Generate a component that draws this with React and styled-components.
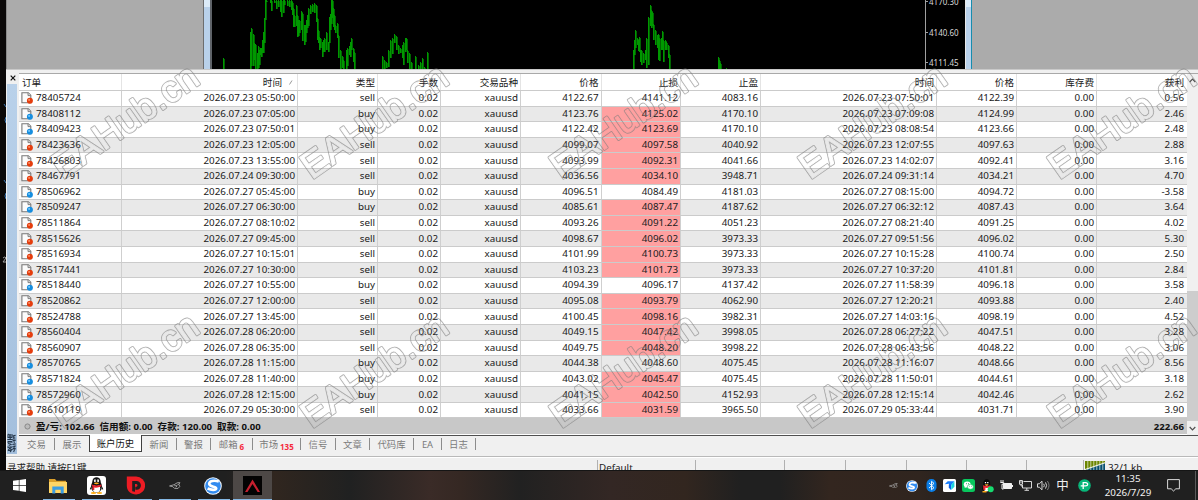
import React from "react";
import styled, { createGlobalStyle } from "styled-components";

const GlobalStyle = createGlobalStyle`
  * {
    box-sizing: border-box;
  }

  body {
    margin: 0;
    overflow: hidden;
    font-family: "Noto Sans", "Noto Sans CJK SC", sans-serif;
    font-size: 9.8px;
    color: #202020;
  }

  svg {
    display: block;
    flex: none;
  }
`;

const Screen = styled.div`
  position: relative;
  width: 1198px;
  height: 500px;
  display: flex;
  flex-direction: column;
  overflow: hidden;
  background: #000;
`;

const Desktop = styled.div`
  height: 470px;
  display: flex;
`;

const DesktopEdge = styled.div`
  width: 6px;
  background: #0b0909;
`;

const Window = styled.div`
  width: 1192px;
  display: flex;
  flex-direction: column;
  background: #f0f0f0;
`;

const Workspace = styled.div`
  height: 69px;
  display: flex;
  background: #ababab;
  border-left: 1px solid #8b8b8b;
`;

const EmptyArea = styled.div`
  width: 196px;
`;

const Frame = styled.div`
  width: ${(p) => p.$width}px;
  background: linear-gradient(#dcebf8 0 7px, #b9d1ea 7px);
  border-left: ${(p) => p.$left};
  border-right: ${(p) => p.$right};
`;

const Chart = styled.div`
  width: 713px;
  background: #000;
`;

const PriceAxis = styled.div`
  width: 40px;
  background: #000;
  border-left: 1px solid #a0a0a0;
  overflow: hidden;
`;

const PriceLabel = styled.div`
  height: 30.5px;
  line-height: 14px;
  margin-top: ${(p) => (p.$first ? "-5px" : 0)};
  font-size: 8px;
  color: #d8d8d8;
  display: flex;
  white-space: nowrap;

  &::before {
    content: "";
    width: 2px;
    height: 1px;
    margin: 6px 1px 0 0;
    background: #a0a0a0;
  }
`;

const Terminal = styled.div`
  height: 388px;
  display: flex;
  border-top: 1px solid #c9c9c9;
  padding: 3px 0 0 1px;
`;

const SideBar = styled.div`
  width: 12px;
  display: flex;
  flex-direction: column;
  align-items: center;
`;

const CloseBox = styled.div`
  height: 11px;
  padding-top: 2px;
`;

const SideCaption = styled.div`
  width: 10px;
  margin-right: 2px;
  height: 370px;
  background: linear-gradient(#b9d1ea, #a3bfdd);
  display: flex;
  align-items: flex-end;
  justify-content: center;
  padding-bottom: 2px;

  span {
    writing-mode: vertical-rl;
    transform: rotate(180deg);
    font: bold 9px/10px "Noto Sans CJK SC", sans-serif;
    color: #26384c;
  }
`;

const Content = styled.div`
  width: 1179px;
`;

const TableArea = styled.div`
  height: 363px;
  display: flex;
  border-top: 1px solid #a9a9a9;
  border-bottom: 1px solid #505050;
  background: #fff;
`;

const Table = styled.div`
  width: 1168px;
`;

const Row = styled.div`
  display: grid;
  grid-template-columns: 102.5px 176.5px 80px 63px 80px 80.5px 79.5px 80px 176px 80px 80px 90px;
  height: 15.6px;
  background: ${(p) => (p.$shaded ? "#e9e9e9" : "#fff")};
  border-bottom: 1px solid #cbcbcb;
`;

const HeadRow = styled(Row)`
  height: 17px;
`;

const Cell = styled.div`
  display: flex;
  align-items: center;
  justify-content: ${(p) => (p.$first ? "flex-start" : "flex-end")};
  padding: 0 ${(p) => (p.$last ? 3 : 2)}px 0 2px;
  border-right: ${(p) => (p.$last ? "none" : "1px solid #cfcfcf")};
  line-height: 14px;
  white-space: nowrap;
  background: ${(p) => (p.$hit ? "#ffa0a0" : "transparent")};
`;

const HeadCell = styled(Cell)`
  font-size: 9.6px;
  border-right-color: #e4e4e4;
  padding-top: 1px;
  padding-left: 3px;

  svg {
    margin: 0 2px 0 7px;
  }
`;

const OrderId = styled.span`
  margin-left: 3px;
`;

const Summary = styled.div`
  height: 16px;
  display: flex;
  align-items: center;
  justify-content: space-between;
  background: #c8c8c8;
  padding: 0 3px 0 5px;
  font-size: 9.6px;
  font-weight: 700;
  color: #111;
  white-space: pre;
`;

const Balance = styled.div`
  display: flex;
  align-items: center;
  gap: 5px;
`;

const ScrollBar = styled.div`
  width: 11px;
  display: flex;
  flex-direction: column;
  align-items: center;
  background: #f0f0f0;
`;

const ScrollButton = styled.div`
  height: 14px;
  display: flex;
  align-items: center;
`;

const ScrollThumb = styled.div`
  width: 11px;
  height: 132px;
  margin-top: 203px;
  background: #cdcdcd;
`;

const Tabs = styled.div`
  display: flex;
  height: 18px;
`;

const Tab = styled.div`
  width: ${(p) => p.$width}px;
  height: ${(p) => (p.$active ? 17 : 16)}px;
  margin-top: ${(p) => (p.$active ? -1 : 0)}px;
  padding-top: 1px;
  display: flex;
  align-items: center;
  justify-content: center;
  font-size: 9.4px;
  line-height: 14px;
  white-space: nowrap;
  color: ${(p) => (p.$active ? "#111" : "#7b7b7b")};
  background: ${(p) => (p.$active ? "#fff" : "transparent")};
  border: ${(p) => (p.$active ? "1px solid #404040" : "none")};
  border-top: none;
`;

const TabDivider = styled.div`
  width: 1px;
  height: 12px;
  margin-top: 2px;
  background: #8c8c8c;
`;

const Count = styled.sub`
  font-size: 8px;
  font-weight: 700;
  line-height: 8px;
  color: #f52b3c;
  margin: 4px 0 0 2px;
`;

const StatusBar = styled.div`
  height: 13px;
  display: grid;
  grid-template-columns: 592px 98px 89px 61px 61px 60px 60px 57px 114px;
  padding-top: 2px;
  border-top: 1px solid #fff;
  box-shadow: 0 -1px 0 #b9b9b9;
  overflow: hidden;
`;

const StatusCell = styled.div`
  border-right: ${(p) => (p.$last ? "none" : "1px solid #b0b0b0")};
  padding-left: 1px;
  font-size: ${(p) => p.$size || 9.8}px;
  line-height: 15px;
  display: flex;
  gap: 3px;
  white-space: nowrap;

  svg {
    margin-top: 1px;
  }
`;

const Taskbar = styled.div`
  height: 30px;
  display: flex;
  justify-content: space-between;
  background: linear-gradient(
    90deg,
    #202020 0 225px,
    #30261f 275px,
    #202121 350px,
    #3a2b27 430px,
    #352823 460px,
    #212121 520px,
    #332724 610px,
    #32261f 685px,
    #202020 740px,
    #202020 780px,
    #33261f 830px,
    #30251f 920px,
    #202020 970px
  );
  border-top: 1px solid #151515;
`;

const TaskButtons = styled.div`
  display: flex;
`;

const TaskButton = styled.div`
  width: 38.8px;
  height: 29px;
  display: flex;
  align-items: center;
  justify-content: center;
  background: ${(p) => (p.$active ? "#4d4846" : "transparent")};
  box-shadow: ${(p) => (p.$active ? "inset 0 -1px 0 #85b8e4" : "none")};
  position: relative;

  &::after {
    content: "";
    display: ${(p) => (p.$running ? "block" : "none")};
    position: absolute;
    left: 4px;
    right: 3px;
    bottom: 0;
    height: 1px;
    background: #85b8e4;
  }
`;

const Tray = styled.div`
  display: flex;
  align-items: center;
`;

const TrayItem = styled.div`
  width: ${(p) => p.$width || 18.8}px;
  display: flex;
  justify-content: center;
  color: #f0f0f0;
  font-size: 12.5px;
  line-height: 16px;
`;

const Clock = styled.div`
  width: 62px;
  display: flex;
  flex-direction: column;
  align-items: center;
  font-size: 9.8px;
  line-height: 14px;
  color: #f3f3f3;
`;

const ShowDesktop = styled.div`
  width: 3px;
  height: 29px;
  margin-left: 8px;
  border-left: 1px solid #5a5a5a;
`;

const WatermarkLayer = styled.svg`
  position: absolute;
  inset: 0;
  pointer-events: none;
`;

const heads = ["订单", "时间", "类型", "手数", "交易品种", "价格", "止损", "止盈", "时间", "价格", "库存费", "获利"];

// id, open time, type, open price, stop loss, take profit, close time, close price, profit, stop loss hit
const orders = [
  ["78405724", "2026.07.23 05:50:00", "sell", "4122.67", "4141.12", "4083.16", "2026.07.23 07:50:01", "4122.39", "0.56", 0],
  ["78408112", "2026.07.23 07:05:00", "buy", "4123.76", "4125.02", "4170.10", "2026.07.23 07:09:08", "4124.99", "2.46", 1],
  ["78409423", "2026.07.23 07:50:01", "buy", "4122.42", "4123.69", "4170.10", "2026.07.23 08:08:54", "4123.66", "2.48", 1],
  ["78423636", "2026.07.23 12:05:00", "sell", "4099.07", "4097.58", "4040.92", "2026.07.23 12:07:55", "4097.63", "2.88", 1],
  ["78426803", "2026.07.23 13:55:00", "sell", "4093.99", "4092.31", "4041.66", "2026.07.23 14:02:07", "4092.41", "3.16", 1],
  ["78467791", "2026.07.24 09:30:00", "sell", "4036.56", "4034.10", "3948.71", "2026.07.24 09:31:14", "4034.21", "4.70", 1],
  ["78506962", "2026.07.27 05:45:00", "buy", "4096.51", "4084.49", "4181.03", "2026.07.27 08:15:00", "4094.72", "-3.58", 0],
  ["78509247", "2026.07.27 06:30:00", "buy", "4085.61", "4087.47", "4187.62", "2026.07.27 06:32:12", "4087.43", "3.64", 1],
  ["78511864", "2026.07.27 08:10:02", "sell", "4093.26", "4091.22", "4051.23", "2026.07.27 08:21:40", "4091.25", "4.02", 1],
  ["78515626", "2026.07.27 09:45:00", "sell", "4098.67", "4096.02", "3973.33", "2026.07.27 09:51:56", "4096.02", "5.30", 1],
  ["78516934", "2026.07.27 10:15:01", "sell", "4101.99", "4100.73", "3973.33", "2026.07.27 10:15:28", "4100.74", "2.50", 1],
  ["78517441", "2026.07.27 10:30:00", "sell", "4103.23", "4101.73", "3973.33", "2026.07.27 10:37:20", "4101.81", "2.84", 1],
  ["78518440", "2026.07.27 10:55:00", "buy", "4094.39", "4096.17", "4137.42", "2026.07.27 11:58:39", "4096.18", "3.58", 0],
  ["78520862", "2026.07.27 12:00:00", "sell", "4095.08", "4093.79", "4062.90", "2026.07.27 12:20:21", "4093.88", "2.40", 1],
  ["78524788", "2026.07.27 13:45:00", "sell", "4100.45", "4098.16", "3982.31", "2026.07.27 14:03:16", "4098.19", "4.52", 1],
  ["78560404", "2026.07.28 06:20:00", "sell", "4049.15", "4047.42", "3998.05", "2026.07.28 06:27:22", "4047.51", "3.28", 1],
  ["78560907", "2026.07.28 06:35:00", "sell", "4049.75", "4048.20", "3998.22", "2026.07.28 06:43:56", "4048.22", "3.06", 1],
  ["78570765", "2026.07.28 11:15:00", "buy", "4044.38", "4048.60", "4075.45", "2026.07.28 11:16:07", "4048.66", "8.56", 0],
  ["78571824", "2026.07.28 11:40:00", "buy", "4043.02", "4045.47", "4075.45", "2026.07.28 11:50:01", "4044.61", "3.18", 1],
  ["78572960", "2026.07.28 12:15:00", "buy", "4041.15", "4042.50", "4152.93", "2026.07.28 12:15:14", "4042.46", "2.62", 1],
  ["78610119", "2026.07.29 05:30:00", "sell", "4033.66", "4031.59", "3965.50", "2026.07.29 05:33:44", "4031.71", "3.90", 1],
];

const tabs = [
  { text: "交易", width: 35 },
  { text: "展示", width: 34 },
  { text: "账户历史", width: 53, active: true },
  { text: "新闻", width: 34 },
  { text: "警报", width: 33 },
  { text: "邮箱", width: 41, count: "6" },
  { text: "市场", width: 47, count: "135" },
  { text: "信号", width: 34 },
  { text: "文章", width: 33 },
  { text: "代码库", width: 43 },
  { text: "EA", width: 27 },
  { text: "日志", width: 33 },
];

// x, high, low
const bars = [
  [11, 58, 69], [38, 32, 69], [39, 28, 66], [41, 34, 66], [42, 43, 60], [43, 44, 69], [45, 53, 69], [46, 46, 68],
  [47, 50, 65], [48, 48, 55], [49, 48, 57], [50, 40, 53], [51, 32, 53], [52, 18, 43], [53, 0, 20], [54, 0, 2],
  [58, 0, 3], [59, 0, 11], [62, 0, 3], [64, 0, 9], [66, 0, 7], [68, 0, 12], [69, 0, 17], [71, 0, 13], [72, 0, 5],
  [75, 0, 6], [77, 0, 7], [79, 0, 10], [80, 2, 15], [81, 8, 27], [82, 15, 27], [84, 5, 26], [85, 15, 37],
  [86, 20, 36], [87, 20, 33], [89, 11, 30], [90, 13, 41], [92, 25, 45], [93, 25, 42], [94, 20, 33], [95, 15, 28],
  [96, 8, 26], [98, 5, 14], [100, 4, 12], [102, 3, 13], [104, 5, 22], [105, 18, 40], [106, 30, 43], [107, 37, 50],
  [108, 38, 48], [110, 42, 57], [111, 40, 52], [112, 38, 52], [114, 32, 50], [116, 42, 52], [117, 17, 43],
  [118, 14, 30], [119, 0, 24], [120, 0, 18], [121, 8, 27], [122, 15, 30], [123, 25, 33], [125, 23, 38],
  [126, 35, 58], [128, 50, 69], [130, 56, 68], [131, 60, 69], [134, 50, 69], [135, 48, 66], [137, 46, 55],
  [138, 42, 57], [139, 38, 50], [141, 48, 62], [142, 52, 69], [170, 56, 69], [172, 60, 69], [174, 62, 68],
  [176, 50, 67], [178, 40, 58], [180, 38, 54], [182, 34, 43], [184, 36, 50], [186, 45, 54], [188, 48, 53],
  [190, 45, 58], [191, 42, 65], [193, 38, 52], [194, 38, 50], [195, 50, 63], [197, 53, 69], [199, 62, 69],
  [203, 56, 69], [206, 65, 69], [208, 62, 69], [210, 58, 69], [212, 67, 69], [215, 52, 69], [421, 50, 69],
  [422, 40, 55], [423, 30, 48], [425, 38, 45], [426, 40, 51], [427, 37, 52], [428, 50, 62], [429, 50, 65],
  [431, 53, 63], [433, 50, 60], [434, 38, 68], [436, 17, 65], [438, 5, 26], [439, 10, 28], [440, 12, 26],
  [441, 24, 40], [443, 30, 45], [445, 35, 48], [446, 34, 60], [447, 38, 61], [449, 38, 50], [450, 31, 50],
  [451, 40, 62], [453, 40, 50], [454, 42, 50], [456, 45, 58], [457, 54, 69], [506, 57, 69], [507, 60, 69],
  [508, 63, 69], [514, 68, 69],
];

const OrderIcon = ({ type }) => (
  <svg width="12" height="12" viewBox="0 0 12 12">
    <path d="M.9.7h6.4l2.5 2.6v7.4H.9z" fill="#fbfbfb" stroke="#777" strokeWidth="1.1" />
    <path d="M7 .7v2.9h2.8" fill="#ddd" stroke="#777" strokeWidth=".9" />
    <circle cx="8.9" cy="8.8" r="3" fill={type === "buy" ? "#168ee0" : "#e53d0d"} />
    <circle cx="8.1" cy="7.9" r=".9" fill={type === "buy" ? "#8bd4ff" : "#ff9f79"} />
  </svg>
);

const BirdIcon = ({ width = 12 }) => (
  <svg width={width} height={width * 0.65} viewBox="0 0 12 8" fill="none" stroke="#a9a9a9" strokeWidth=".9">
    <path d="M.4 4.1 5 2.8 8.5.7h2.6L10 2.4l.9 2.2-1.8 2H5.5L3.8 4.8z" />
    <path d="M5.2 3.8h3L6.8 5.5M8.5 2.3l1.5.1" />
  </svg>
);

const SogouIcon = ({ size }) => (
  <svg width={size} height={size} viewBox="0 0 18 18">
    <circle cx="9" cy="9" r="8.8" fill="#f3f7fc" />
    <circle cx="9" cy="9" r="7.8" fill="#318bf0" />
    <path d="M14.8 4.6C10 2.9 5.3 4 5.2 6.8c0 3.3 7.2 2.5 7 4.6-.2 2-5 1.8-8.6.2" fill="none" stroke="#fff" strokeWidth="2.7" />
  </svg>
);

const QQIcon = () => (
  <svg width="19" height="19" viewBox="0 0 19 19">
    <rect width="19" height="19" rx="3" fill="#fff" />
    <ellipse cx="9.5" cy="10.5" rx="5.4" ry="6.2" fill="#111" />
    <path d="m4.7 9-2 4.3 1.5.2M14.3 9l2 4.3-1.5.2" fill="#111" />
    <ellipse cx="9.5" cy="12.5" rx="3.7" ry="4" fill="#fff" />
    <ellipse cx="9.5" cy="5.7" rx="4.2" ry="4.4" fill="#111" />
    <ellipse cx="8" cy="4.7" rx="1.1" ry="1.5" fill="#fff" />
    <ellipse cx="11" cy="4.7" rx="1.1" ry="1.5" fill="#fff" />
    <path d="M8.3 4.5v1M10.7 4.5v1" stroke="#111" strokeWidth=".7" />
    <path d="M6.8 7.2q2.7-1.2 5.4 0-2.7 2-5.4 0" fill="#ffac13" />
    <path d="M4.7 8.6q4.8 2 9.6 0v2q-4 1.6-7 1v2.3H5.5V11z" fill="#e71f2b" />
    <ellipse cx="6.5" cy="17" rx="2.7" ry="1.1" fill="#ffac13" />
    <ellipse cx="12.5" cy="17" rx="2.7" ry="1.1" fill="#ffac13" />
  </svg>
);

const taskIcons = [
  {
    icon: (
      <svg width="13" height="13" viewBox="0 0 13 13" fill="#fff">
        <path d="M0 1.8 5.8 1v5H0zM6.5.9 13 0v6H6.5zM0 6.8h5.8v5L0 11zM6.5 6.8H13V13l-6.5-1z" />
      </svg>
    ),
  },
  {
    running: true,
    icon: (
      <svg width="18" height="16" viewBox="0 0 18 16">
        <path d="M0 1h6l1.5 1.7H17V7H0z" fill="#dca02b" />
        <path d="M0 4h18v11H0z" fill="#ffd566" />
        <path d="M3.3 15.5V8.6h11.4v6.9h-3v-3.7H6.3v3.7z" fill="#3c9de3" />
      </svg>
    ),
  },
  { running: true, icon: <QQIcon /> },
  {
    running: true,
    icon: (
      <svg width="19" height="19" viewBox="0 0 19 19">
        <path d="M.8.6h9.4a8.8 8.8 0 0 1 0 17.8C4.6 18.4.8 15.2.8 9.5z" fill="#ed1c24" />
        <path d="M6.2 15.2V5h4.2a4.4 4.4 0 0 1 .3 8.8H9.3v-3h1.2a1.5 1.5 0 0 0 0-2.8H9v7.8z" fill="#202020" />
      </svg>
    ),
  },
  { running: true, icon: <BirdIcon /> },
  { running: true, icon: <SogouIcon size={18} /> },
  {
    active: true,
    icon: (
      <svg width="19" height="19" viewBox="0 0 19 19">
        <rect width="19" height="19" fill="#030303" />
        <path d="m2 16 7.5-12.5L17 16h-2.4L9.5 8 4.5 16z" fill="#c6202f" />
      </svg>
    ),
  },
];

const trayIcons = [
  <BirdIcon width={9} />,
  <SogouIcon size={12} />,
  <svg width="11" height="13" viewBox="0 0 11 13">
    <rect x=".5" width="10" height="13" rx="4.8" fill="#0a7de5" />
    <path d="m3 4 5 4.7-2.5 2V2.3L8 4.4 3 9" fill="none" stroke="#fff" strokeWidth=".9" />
  </svg>,
  <svg width="13" height="13" viewBox="0 0 13 13">
    <rect width="13" height="13" rx="1.5" fill="#fff" />
    <path d="m1.7 5.2 3-3h6.6L8.4 6H6V4.7z" fill="#167dfd" />
    <path d="M5.8 5.4H8V11L5.8 8.7z" fill="#0a60e9" />
    <path d="m8.2 5.8 3.2-3.5v5.4L8.2 11z" fill="#1ad5dd" />
  </svg>,
  <svg width="13" height="13" viewBox="0 0 13 13">
    <rect width="13" height="13" rx="2.5" fill="#08c75d" />
    <ellipse cx="5.2" cy="5.4" rx="3.5" ry="3" fill="#fff" />
    <path d="m3 7-.4 2 2-1" fill="#fff" />
    <ellipse cx="8.4" cy="7.8" rx="3" ry="2.5" fill="#fff" stroke="#08c75d" strokeWidth=".6" />
    <path d="M4 4.7h.8m1.4 0H7M7.3 7.3h.5m1.3 0h.5" stroke="#08a04c" />
  </svg>,
  <svg width="13" height="14" viewBox="0 0 13 14">
    <ellipse cx="5.7" cy="5" rx="3.5" ry="4.8" fill="#080808" />
    <ellipse cx="5.7" cy="9.2" rx="4.5" ry="4" fill="#080808" />
    <ellipse cx="5.7" cy="9.5" rx="2.8" ry="3" fill="#fff" />
    <path d="M4.5 3v1.3M6.8 3v1.3" stroke="#fff" strokeWidth="1.3" />
    <path d="M3.5 5.2h4.4L5.7 6.7z" fill="#ffb018" />
    <path d="M2 6.3q3.7 1.6 7.4 0v1.8q-3 1.2-5 .7V11H2.5z" fill="#ee2530" />
    <path d="M1.5 12.7h4" stroke="#ffa918" strokeWidth="1.5" />
    <circle cx="9.7" cy="10.3" r="3" fill="#16dc70" />
  </svg>,
  <svg width="13" height="11" viewBox="0 0 13 11" fill="none" stroke="#f0f0f0">
    <path d="M3.5 3.5h8v5h-8z" fill="#f0f0f0" />
    <path d="M12.5 5v2M1 0v2m2-2v2M.3 2.5h3.4v1.7H2V9h1.5" />
  </svg>,
  <svg width="13" height="11" viewBox="0 0 13 11" fill="none" stroke="#eaeaea" strokeWidth=".9">
    <path d="M4.5 1.5h8V8h-9V5M7.8 8v2.3M5.5 10.3H10M.5.5h3v3.8h-3zM2 4.3V6h1.5M.5 2h3" />
  </svg>,
  <svg width="13" height="11" viewBox="0 0 13 11" fill="none" stroke="#eaeaea" strokeWidth=".9">
    <path d="M.5 3.8h1.8L5 1.2v8.6L2.3 7.2H.5zM6.7 3.8q1.2 1.6 0 3.4M8.5 2.4q2.2 3 0 6.2" />
    <path d="M10.4 1q3.2 4.4 0 9" stroke="#858585" />
  </svg>,
];

const PIcon = () => (
  <svg width="13" height="13" viewBox="0 0 13 13">
    <circle cx="6.5" cy="6.5" r="6.3" fill="#08b679" />
    <path d="M5.2 10V3.7h2.4c2.9 0 2.7 3.2 0 3.2H2.7" fill="none" stroke="#fff" strokeWidth="1.3" />
  </svg>
);

const NoticeIcon = () => (
  <svg width="13" height="13" viewBox="0 0 13 13" fill="none" stroke="#eee" strokeWidth=".9">
    <path d="M.6.6h11.8v9.2H8.8L6.5 12 4.2 9.8H.6z" />
  </svg>
);

const TrafficIcon = () => (
  <svg width="20" height="12" viewBox="0 0 20 12">
    <rect width="20" height="12" fill="#6c8500" />
    <path d="M0 9 20 2v10H0z" fill="#064f72" />
    <path d="M0 8.5 20 1.8" stroke="#fff" strokeWidth="1" />
    <path d="M2.8 0v12M5.8 0v12M8.8 0v12M11.8 0v12M14.8 0v12M17.8 0v12" stroke="#eef0e4" strokeWidth=".7" />
  </svg>
);

const Arrow = ({ down }) => (
  <svg width="7" height="5" viewBox="0 0 7 5" fill="none" stroke="#505050" strokeWidth="1.2">
    <path d={down ? "m.7 1 2.8 2.8L6.3 1" : "m.7 4 2.8-2.8L6.3 4"} />
  </svg>
);

const ChartWindow = () => (
  <>
    <Frame $width={9} $left="1px solid #6d6d6d" $right="2px solid #5f6369" />
    <Chart>
      <svg width="713" height="69" shapeRendering="crispEdges">
        {bars.map(([x, high, low]) => (
          <g key={x}>
            <rect x={x + 1} y={high + 1} width="1" height={low - high - 1} fill="#006400" />
            <rect x={x} y={high} width="1" height={low - high} fill="#009800" />
          </g>
        ))}
      </svg>
    </Chart>
    <PriceAxis>
      <PriceLabel $first>4170.30</PriceLabel>
      <PriceLabel>4140.60</PriceLabel>
      <PriceLabel>4111.45</PriceLabel>
    </PriceAxis>
    <Frame $width={7} $left="1px solid #e8e8e8" $right="1px solid #168daf" />
  </>
);

const OrderRow = ({ order, index }) => {
  const [id, opened, type, price, sl, tp, closed, closePrice, profit, hit] = order;
  return (
    <Row $shaded={index % 2 === 1}>
      <Cell $first>
        <OrderIcon type={type} />
        <OrderId>{id}</OrderId>
      </Cell>
      <Cell>{opened}</Cell>
      <Cell>{type}</Cell>
      <Cell>0.02</Cell>
      <Cell>xauusd</Cell>
      <Cell>{price}</Cell>
      <Cell $hit={hit}>{sl}</Cell>
      <Cell>{tp}</Cell>
      <Cell>{closed}</Cell>
      <Cell>{closePrice}</Cell>
      <Cell>0.00</Cell>
      <Cell $last>{profit}</Cell>
    </Row>
  );
};

const WatermarkText = ({ x, y, color, width }) => (
  <text
    transform={`translate(${x} ${y}) rotate(-35)`}
    fontFamily="Liberation Sans, sans-serif"
    fontSize="37"
    letterSpacing="0.45"
    fill={color}
    stroke={color}
    strokeWidth={width}
    strokeLinejoin="round"
  >
    EAHub.cn
  </text>
);

// The mask keeps a thin ring around each glyph, so the rows show through the letters.
const Watermarks = () => {
  const spots = [180, 429].flatMap((y) => [0, 1, 2, 3, 4].map((n) => ({ x: 62.5 + n * 249.2, y })));
  return (
    <WatermarkLayer width="1198" height="470">
      <mask id="ring" maskUnits="userSpaceOnUse" x="0" y="0" width="1198" height="470">
        {spots.map((spot) => (
          <g key={`${spot.x}-${spot.y}`}>
            <WatermarkText {...spot} color="#fff" width={2.6} />
            <WatermarkText {...spot} color="#000" width={0.9} />
          </g>
        ))}
      </mask>
      <rect width="1198" height="470" fill="#7c7c7c" fillOpacity=".6" mask="url(#ring)" />
    </WatermarkLayer>
  );
};

const App = () => {
  return (
    <>
      <GlobalStyle />
      <Screen>
        <Desktop>
          <DesktopEdge>
            <svg width="6" height="470" fill="none" stroke="#3c78b4">
              <path d="m4 104 2 3M6 117q-2 3 0 6M4 180l2 3M6 193q-2 3 0 6" />
              <path d="M3 258q2-2 3 0l-3 4h3" stroke="#a0a0a0" />
            </svg>
          </DesktopEdge>
          <Window>
            <Workspace>
              <EmptyArea />
              <ChartWindow />
            </Workspace>
            <Terminal>
              <SideBar>
                <CloseBox>
                  <svg width="6" height="6" viewBox="0 0 6 6" stroke="#111" strokeWidth="1.2">
                    <path d="m.7.7 4.6 4.6M5.3.7.7 5.3" />
                  </svg>
                </CloseBox>
                <SideCaption>
                  <span>终端</span>
                </SideCaption>
              </SideBar>
              <Content>
                <TableArea>
                  <Table>
                    <HeadRow>
                      {heads.map((head, i) => (
                        <HeadCell key={i} $first={i === 0} $last={i === heads.length - 1}>
                          {head}
                          {i === 1 && (
                            <svg width="4" height="5" viewBox="0 0 4 5" stroke="#999">
                              <path d="M.5 4.5 3 .5" />
                            </svg>
                          )}
                        </HeadCell>
                      ))}
                    </HeadRow>
                    {orders.map((order, i) => (
                      <OrderRow key={order[0]} order={order} index={i} />
                    ))}
                    <Summary>
                      <Balance>
                        <svg width="7" height="7" viewBox="0 0 7 7">
                          <circle cx="3.5" cy="3.5" r="2.6" fill="#bbb" stroke="#888" />
                        </svg>
                        {"盈/亏: 102.66  信用额: 0.00  存款: 120.00  取款: 0.00"}
                      </Balance>
                      <span>222.66</span>
                    </Summary>
                  </Table>
                  <ScrollBar>
                    <ScrollButton>
                      <Arrow />
                    </ScrollButton>
                    <ScrollThumb />
                    <ScrollButton>
                      <Arrow down />
                    </ScrollButton>
                  </ScrollBar>
                </TableArea>
                <Tabs>
                  {tabs.map((tab, i) => (
                    <React.Fragment key={tab.text}>
                      <Tab $width={tab.width} $active={tab.active}>
                        {tab.text}
                        {tab.count && <Count>{tab.count}</Count>}
                      </Tab>
                      {i !== 1 && i !== 2 && <TabDivider />}
                    </React.Fragment>
                  ))}
                </Tabs>
              </Content>
            </Terminal>
            <StatusBar>
              <StatusCell $size={9.5}>寻求帮助,请按F1键</StatusCell>
              <StatusCell>Default</StatusCell>
              <StatusCell />
              <StatusCell />
              <StatusCell />
              <StatusCell />
              <StatusCell />
              <StatusCell />
              <StatusCell $last>
                <TrafficIcon />
                32/1 kb
              </StatusCell>
            </StatusBar>
          </Window>
        </Desktop>
        <Taskbar>
          <TaskButtons>
            {taskIcons.map((task, i) => (
              <TaskButton key={i} $running={task.running} $active={task.active}>
                {task.icon}
              </TaskButton>
            ))}
          </TaskButtons>
          <Tray>
            {trayIcons.map((icon, i) => (
              <TrayItem key={i}>{icon}</TrayItem>
            ))}
            <TrayItem>中</TrayItem>
            <TrayItem $width={25}>
              <PIcon />
            </TrayItem>
            <Clock>
              <span>11:35</span>
              <span>2026/7/29</span>
            </Clock>
            <TrayItem $width={28}>
              <NoticeIcon />
            </TrayItem>
            <ShowDesktop />
          </Tray>
        </Taskbar>
        <Watermarks />
      </Screen>
    </>
  );
};

export default App;
